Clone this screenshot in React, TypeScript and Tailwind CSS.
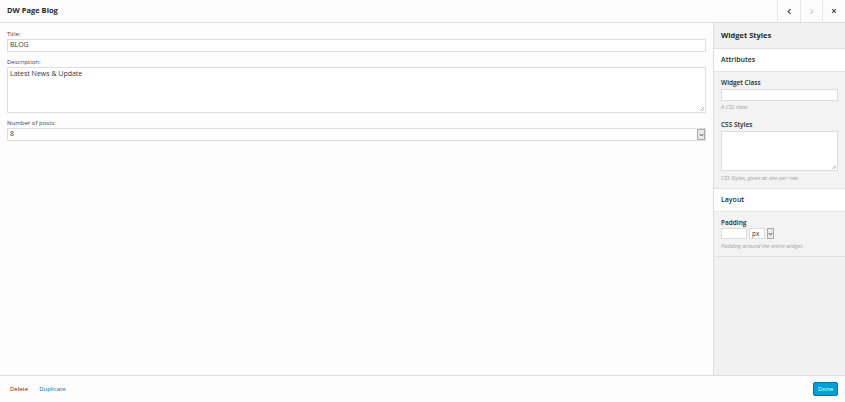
const font = { fontFamily: '"Open Sans", "Liberation Sans", sans-serif' };

const Field = ({ label, children }: { label: string; children: React.ReactNode }) => (
  <div className="mb-[6px]">
    <div className="text-[6px] leading-[8px] text-[#444] mb-[1px]">{label}</div>
    {children}
  </div>
);

const SideSection = ({ title, children }: { title: string; children: React.ReactNode }) => (
  <>
    <div className="h-[23px] bg-white border-b border-[#e5e5e5] flex items-center px-[7px] text-[7px] font-semibold text-[#23282d]">
      {title}
    </div>
    <div className="bg-[#f3f3f3] border-b border-[#e1e1e1] px-[7px] pt-[6px] pb-[6px]">{children}</div>
  </>
);

const Grip = () => (
  <svg className="absolute right-[1px] bottom-[1px]" width="4" height="4" viewBox="0 0 4 4">
    <path d="M4 0 0 4M4 2 2 4" stroke="#999" strokeWidth="0.6" />
  </svg>
);

const Caret = ({ w }: { w: string }) => (
  <span className={`${w} h-[11px] bg-[#e9e9e9] border border-[#aaa] flex items-center justify-center`}>
    <svg width="5" height="4" viewBox="0 0 6 4"><path d="M1 1l2 2 2-2" fill="none" stroke="#333" strokeWidth="1.2" /></svg>
  </span>
);

const App = () => (
  <div style={font} className="w-[845px] h-[402px] flex flex-col bg-[#fcfcfc] text-[#32373c] overflow-hidden">
    <header className="h-[23px] flex items-stretch border-b border-[#dddddd] bg-[#fcfcfc]">
      <h1 className="flex-1 flex items-center pl-[7px] text-[7.5px] font-bold text-[#23282d]">DW Page Blog</h1>
      <button className="w-[23px] border-l border-[#e5e5e5] flex items-center justify-center">
        <svg width="7" height="7" viewBox="0 0 10 10"><path d="M6.5 1.5 3 5l3.5 3.5" fill="none" stroke="#444" strokeWidth="1.6" /></svg>
      </button>
      <button className="w-[22px] border-l border-[#e5e5e5] flex items-center justify-center">
        <svg width="7" height="7" viewBox="0 0 10 10"><path d="M3.5 1.5 7 5 3.5 8.5" fill="none" stroke="#ccc" strokeWidth="1.6" /></svg>
      </button>
      <button className="w-[23px] border-l border-[#e5e5e5] flex items-center justify-center">
        <svg width="6" height="6" viewBox="0 0 10 10"><path d="M2 2l6 6M8 2 2 8" fill="none" stroke="#444" strokeWidth="1.8" /></svg>
      </button>
    </header>

    <div className="flex-1 flex min-h-0">
      <main className="flex-1 px-[7px] pt-[7px] bg-[#fdfdfd]">
        <Field label="Title:">
          <div className="h-[13px] bg-white border border-[#dddddd] flex items-center px-[2px] text-[7px] text-[#32373c]">BLOG</div>
        </Field>
        <Field label="Description:">
          <div className="relative h-[46px] bg-white border border-[#dddddd] px-[2px] pt-[1px] text-[7px] leading-[10px] text-[#32373c]">
            Latest News &amp; Update
            <Grip />
          </div>
        </Field>
        <Field label="Number of posts:">
          <div className="h-[13px] bg-white border border-[#dddddd] flex items-center pl-[2px] text-[7px] text-[#32373c]">
            <span className="flex-1">8</span>
            <Caret w="w-[8px]" />
          </div>
        </Field>
      </main>

      <aside className="w-[132px] border-l border-[#dddddd] bg-[#f1f1f1] flex flex-col">
        <div className="h-[26px] flex items-center px-[7px] text-[7.5px] font-bold text-[#23282d] border-b border-[#e1e1e1]">Widget Styles</div>
        <SideSection title="Attributes">
          <div className="text-[6.5px] font-semibold text-[#23282d] leading-[9px] mb-[2px]">Widget Class</div>
          <div className="h-[12px] bg-white border border-[#dddddd]" />
          <div className="text-[5.5px] italic text-[#a0a0a0] leading-[8px] mt-[2px] mb-[9px]">A CSS class</div>
          <div className="text-[6.5px] font-semibold text-[#23282d] leading-[9px] mb-[2px]">CSS Styles</div>
          <div className="relative h-[40px] bg-white border border-[#dddddd]">
            <Grip />
          </div>
          <div className="text-[5.5px] italic text-[#a0a0a0] leading-[8px] mt-[3px]">CSS Styles, given as one per row.</div>
        </SideSection>
        <SideSection title="Layout">
          <div className="text-[6.5px] font-semibold text-[#23282d] leading-[9px] mb-[1px]">Padding</div>
          <div className="flex gap-[2px] items-center">
            <div className="w-[26px] h-[11px] bg-white border border-[#dddddd]" />
            <div className="w-[16px] h-[11px] bg-white border border-[#dddddd] text-[6.5px] leading-[9px] px-[2px]">px</div>
            <Caret w="w-[7px]" />
          </div>
          <div className="text-[5.5px] italic text-[#a0a0a0] leading-[8px] mt-[3px]">Padding around the entire widget.</div>
        </SideSection>
      </aside>
    </div>

    <footer className="h-[27px] border-t border-[#dddddd] bg-[#fcfcfc] flex items-center px-[10px] text-[6px]">
      <a className="text-[#a00] mr-[11px]">Delete</a>
      <a className="text-[#0073aa]">Duplicate</a>
      <button className="ml-auto mr-[-3px] h-[14px] w-[25px] bg-[#00a0d2] border border-[#0073aa] rounded-[2px] text-white text-[6px]">Done</button>
    </footer>
  </div>
);

export default App;
